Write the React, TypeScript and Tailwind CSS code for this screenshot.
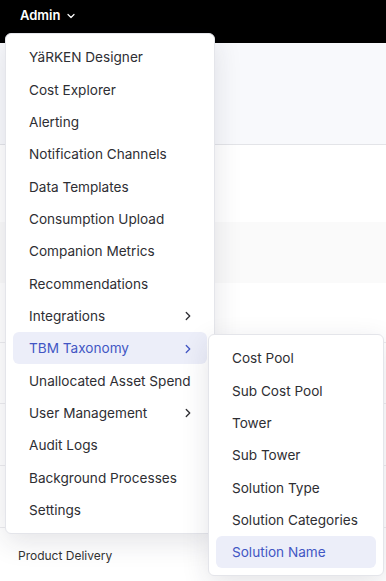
import React from 'react';
import { ChevronDown, ChevronRight } from 'lucide-react';

const adminItems = [
  { label: 'YäRKEN Designer' },
  { label: 'Cost Explorer' },
  { label: 'Alerting' },
  { label: 'Notification Channels' },
  { label: 'Data Templates' },
  { label: 'Consumption Upload' },
  { label: 'Companion Metrics' },
  { label: 'Recommendations' },
  { label: 'Integrations', sub: true },
  { label: 'TBM Taxonomy', sub: true, active: true },
  { label: 'Unallocated Asset Spend' },
  { label: 'User Management', sub: true },
  { label: 'Audit Logs' },
  { label: 'Background Processes' },
  { label: 'Settings' },
];

const taxonomyItems = [
  { label: 'Cost Pool' },
  { label: 'Sub Cost Pool' },
  { label: 'Tower' },
  { label: 'Sub Tower' },
  { label: 'Solution Type' },
  { label: 'Solution Categories' },
  { label: 'Solution Name', active: true },
];

function MenuItem({ label, sub, active }: { label: string; sub?: boolean; active?: boolean }) {
  return (
    <div
      className={`h-[32.33px] flex items-center justify-between pl-4 pr-[12px] rounded-md text-[13.6px] whitespace-nowrap pt-px ${
        active ? 'bg-[#eceef9] text-[#4256c4]' : 'text-[#2e2e33]'
      }`}
    >
      <span>{label}</span>
      {sub && <ChevronRight className="w-[14px] h-[14px]" strokeWidth={2.2} />}
    </div>
  );
}

export default function App() {
  return (
    <div className="relative w-[386px] h-[581px] overflow-hidden bg-white" style={{ fontFamily: 'Inter, "Noto Sans", sans-serif' }}>
      {/* ── Top bar ─────────────────── */}
      <div className="h-[43px] bg-black flex items-start px-5 pt-[7px]">
        <button className="flex items-center gap-[5px] text-white text-[13px] font-semibold h-[18px]">
          Admin <ChevronDown className="w-3 h-3" strokeWidth={2.4} />
        </button>
      </div>

      {/* ── Page behind the menu ─────────── */}
      <div className="h-[102px] bg-[#f8f9fc] border-b border-[#e3e4e8]" />
      <div className="h-[77px]" />
      <div className="h-[61px] bg-[#fafafa]" />
      <div className="h-[60px] border-b border-[#ececef]" />
      <div className="h-[61px] border-b border-[#ececef]" />
      <div className="h-[62px] border-b border-[#ececef]" />
      <div className="h-[62px] border-b border-[#ececef]" />
      <div className="px-[18px] pt-[19px] text-[12px] text-[#333]">Product Delivery</div>

      {/* ── Admin dropdown ─────────────── */}
      <div className="absolute left-[5px] top-[33px] w-[210px] bg-white rounded-md border border-[#e4e5ea] shadow-[0_8px_28px_rgba(30,35,60,0.12)] px-[7px] py-[7px]">
        {adminItems.map((it) => (
          <MenuItem key={it.label} {...it} />
        ))}
      </div>

      {/* ── TBM Taxonomy submenu ─────────── */}
      <div className="absolute left-[208px] top-[334px] w-[176px] bg-white rounded-md border border-[#e4e5ea] shadow-[0_8px_28px_rgba(30,35,60,0.12)] px-[7px] py-[7px]">
        {taxonomyItems.map((it) => (
          <MenuItem key={it.label} {...it} />
        ))}
      </div>
    </div>
  );
}
